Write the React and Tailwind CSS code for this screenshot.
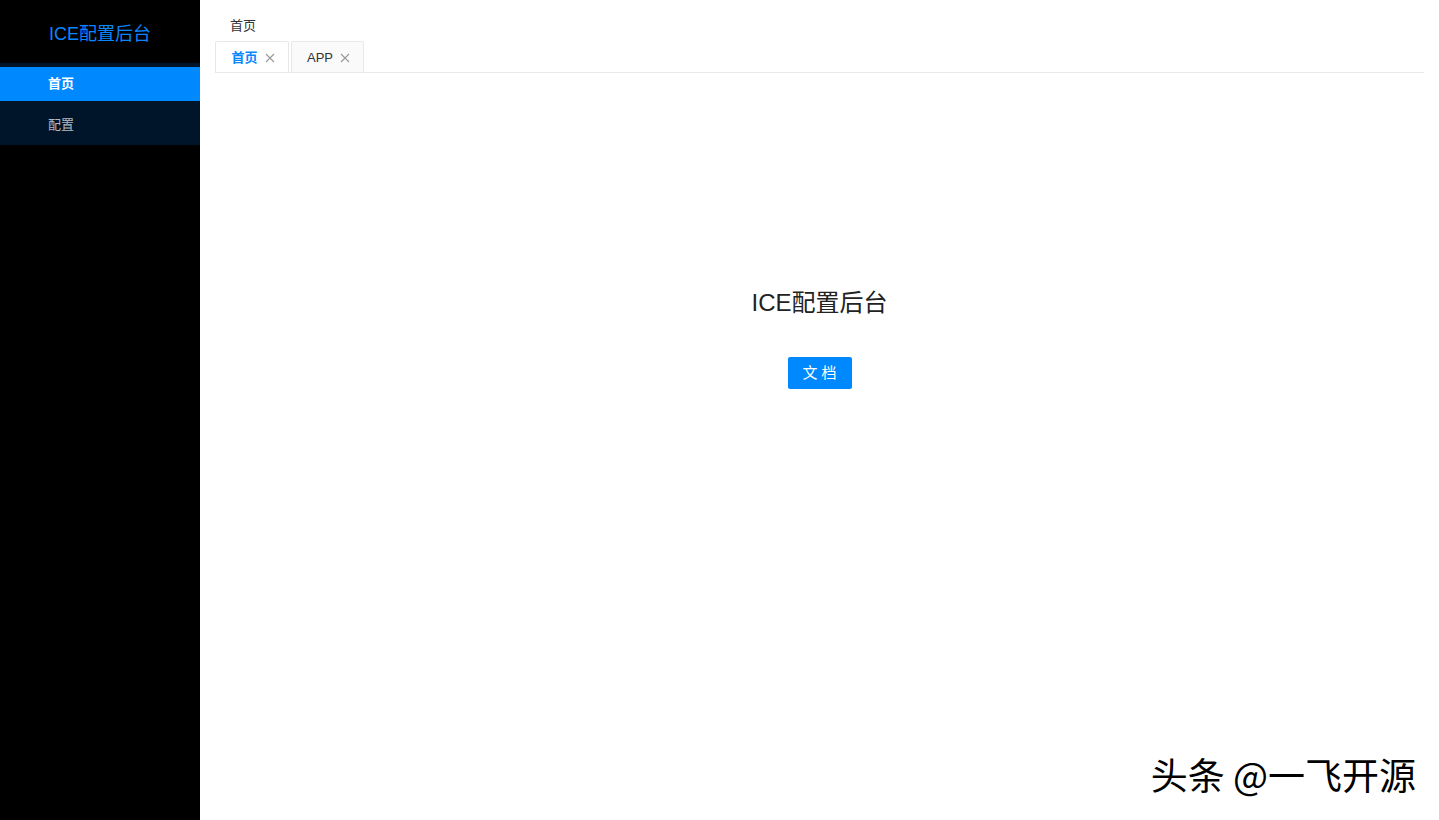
import React from "react";

const FONT = "font-['Liberation_Sans','Noto_Sans_CJK_SC',sans-serif]";

function Close() {
  return (
    <svg width="10" height="10" viewBox="0 0 10 10" className="ml-[7px]">
      <path d="M1 1L9 9M9 1L1 9" stroke="#999" strokeWidth="1.1" fill="none" />
    </svg>
  );
}

export default function App() {
  return (
    <div className={`flex h-[820px] w-[1439px] overflow-hidden bg-white ${FONT}`}>
      <aside className="flex w-[200px] shrink-0 flex-col bg-black">
        <div className="flex h-[63px] items-center justify-center pt-[5px] text-[18px] text-[#0a86ff]">
          ICE配置后台
        </div>
        <div className="bg-[#001529] pt-[4px]">
          <div className="flex h-[34px] items-center bg-[#0088ff] pl-[48px] text-[13px] font-bold text-white">
            首页
          </div>
          <div className="flex h-[44px] items-center pl-[48px] pt-[3px] text-[13px] text-[#b3b9c1]">
            配置
          </div>
        </div>
      </aside>
      <main className="flex flex-1 flex-col pl-[15px] pr-[15px]">
        <div className="flex h-[41px] items-start pl-[15px] pt-[16px] text-[13px] text-[#333]">
          首页
        </div>
        <div className="flex h-[32px] items-end gap-[2px] border-b border-[#e8e8e8]">
          <div className="flex h-[31px] w-[74px] items-center justify-center rounded-t-[2px] border border-b-0 border-[#e8e8e8] bg-white pl-[2px] pt-[2px] text-[13px] font-bold text-[#0a86ff]">
            首页
            <Close />
          </div>
          <div className="flex h-[31px] w-[73px] items-center justify-center rounded-t-[2px] border border-b-0 border-[#e8e8e8] bg-[#fafafa] pl-[2px] pt-[2px] text-[13px] text-[#333]">
            APP
            <Close />
          </div>
        </div>
        <div className="flex flex-col items-center pt-[214px]">
          <h1 className="text-[24px] leading-[32px] text-[#222]">ICE配置后台</h1>
          <button className="mt-[38px] flex h-[32px] w-[64px] items-center justify-center rounded-[2px] bg-[#0088ff] text-[15px] tracking-[4px] text-white">
            <span className="pl-[4px]">文档</span>
          </button>
        </div>
        <div className="mt-auto flex justify-end pb-[24px] pr-[8px]">
          <span className="font-['Noto_Sans_CJK_SC',sans-serif] text-[37px] leading-[44px] text-black [text-shadow:1px_1px_0_#fff,-1px_-1px_0_#fff,1px_-1px_0_#fff,-1px_1px_0_#fff]">
            头条 @一飞开源
          </span>
        </div>
      </main>
    </div>
  );
}
